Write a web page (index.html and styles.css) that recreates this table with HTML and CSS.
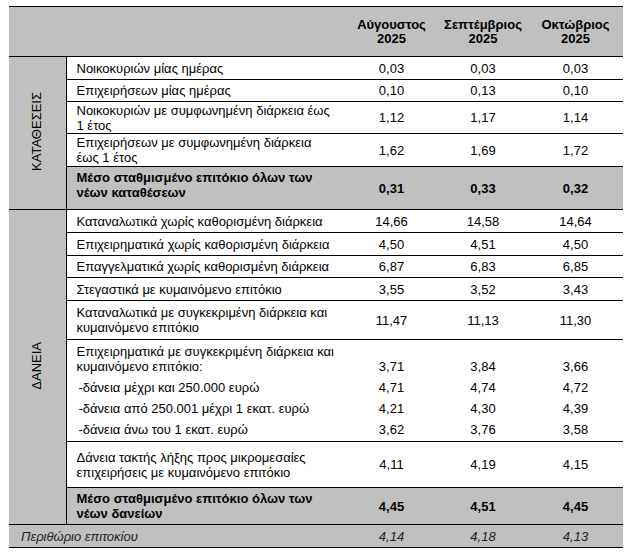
FILE: index.html
```html
<!DOCTYPE html>
<html lang="el">
<head>
<meta charset="utf-8">
<title>Επιτόκια</title>
<link rel="stylesheet" href="styles.css">
</head>
<body>
<table class="rates">
  <colgroup>
    <col class="c-cat">
    <col class="c-label">
    <col class="c-n1">
    <col class="c-n2">
    <col class="c-n3">
  </colgroup>
  <thead>
    <tr class="h-head">
      <th colspan="2"></th>
      <th>Αύγουστος<br>2025</th>
      <th>Σεπτέμβριος<br>2025</th>
      <th>Οκτώβριος<br>2025</th>
    </tr>
  </thead>
  <tbody>
    <tr class="h23">
      <td class="cat" rowspan="5"><span class="vert">ΚΑΤΑΘΕΣΕΙΣ</span></td>
      <td class="label">Νοικοκυριών μίας ημέρας</td>
      <td class="num">0,03</td><td class="num">0,03</td><td class="num">0,03</td>
    </tr>
    <tr class="h22">
      <td class="label">Επιχειρήσεων μίας ημέρας</td>
      <td class="num">0,10</td><td class="num">0,13</td><td class="num">0,10</td>
    </tr>
    <tr class="h32">
      <td class="label">Νοικοκυριών με συμφωνημένη διάρκεια έως<br>1 έτος</td>
      <td class="num">1,12</td><td class="num">1,17</td><td class="num">1,14</td>
    </tr>
    <tr class="h33">
      <td class="label">Επιχειρήσεων με συμφωνημένη διάρκεια<br>έως 1 έτος</td>
      <td class="num">1,62</td><td class="num">1,69</td><td class="num">1,72</td>
    </tr>
    <tr class="h43 total total-dep">
      <td class="label">Μέσο σταθμισμένο επιτόκιο όλων των<br>νέων καταθέσεων</td>
      <td class="num">0,31</td><td class="num">0,33</td><td class="num">0,32</td>
    </tr>
  </tbody>
  <tbody>
    <tr class="h23">
      <td class="cat" rowspan="11"><span class="vert">ΔΑΝΕΙΑ</span></td>
      <td class="label">Καταναλωτικά χωρίς καθορισμένη διάρκεια</td>
      <td class="num">14,66</td><td class="num">14,58</td><td class="num">14,64</td>
    </tr>
    <tr class="h23">
      <td class="label">Επιχειρηματικά χωρίς καθορισμένη διάρκεια</td>
      <td class="num">4,50</td><td class="num">4,51</td><td class="num">4,50</td>
    </tr>
    <tr class="h22">
      <td class="label">Επαγγελματικά χωρίς καθορισμένη διάρκεια</td>
      <td class="num">6,87</td><td class="num">6,83</td><td class="num">6,85</td>
    </tr>
    <tr class="h23">
      <td class="label">Στεγαστικά με κυμαινόμενο επιτόκιο</td>
      <td class="num">3,55</td><td class="num">3,52</td><td class="num">3,43</td>
    </tr>
    <tr class="h39">
      <td class="label">Καταναλωτικά με συγκεκριμένη διάρκεια και<br>κυμαινόμενο επιτόκιο</td>
      <td class="num">11,47</td><td class="num">11,13</td><td class="num">11,30</td>
    </tr>
    <tr class="h38 grp">
      <td class="label">Επιχειρηματικά με συγκεκριμένη διάρκεια και<br>κυμαινόμενο επιτόκιο:</td>
      <td class="num">3,71</td><td class="num">3,84</td><td class="num">3,66</td>
    </tr>
    <tr class="h20 sub">
      <td class="label">-δάνεια μέχρι και 250.000 ευρώ</td>
      <td class="num">4,71</td><td class="num">4,74</td><td class="num">4,72</td>
    </tr>
    <tr class="h21 sub">
      <td class="label">-δάνεια από 250.001 μέχρι 1 εκατ. ευρώ</td>
      <td class="num">4,21</td><td class="num">4,30</td><td class="num">4,39</td>
    </tr>
    <tr class="h23 sub last">
      <td class="label">-δάνεια άνω του 1 εκατ. ευρώ</td>
      <td class="num">3,62</td><td class="num">3,76</td><td class="num">3,58</td>
    </tr>
    <tr class="h46">
      <td class="label">Δάνεια τακτής λήξης προς μικρομεσαίες<br>επιχειρήσεις με κυμαινόμενο επιτόκιο</td>
      <td class="num">4,11</td><td class="num">4,19</td><td class="num">4,15</td>
    </tr>
    <tr class="h37 total">
      <td class="label">Μέσο σταθμισμένο επιτόκιο όλων των<br>νέων δανείων</td>
      <td class="num">4,45</td><td class="num">4,51</td><td class="num">4,45</td>
    </tr>
  </tbody>
  <tfoot>
    <tr class="h23 margin">
      <td class="margin-label" colspan="2">Περιθώριο επιτοκίου</td>
      <td class="num">4,14</td><td class="num">4,18</td><td class="num">4,13</td>
    </tr>
  </tfoot>
</table>
</body>
</html>
```

FILE: styles.css
```css
html, body {
  margin: 0;
  background: #ffffff;
}

body {
  padding: 6px 12px 0 9px;
  font-family: "Liberation Sans", Arial, sans-serif;
  font-size: 13px;
  color: #000;
}

.rates {
  width: 614px;
  table-layout: fixed;
  border-collapse: collapse;
  border-top: 1px solid #000;
}

.c-cat { width: 57px; }
.c-label { width: 279px; }
.c-n1 { width: 93px; }
.c-n2 { width: 90px; }
.c-n3 { width: 95px; }

.rates th,
.rates td {
  padding: 0;
  line-height: 15px;
  vertical-align: middle;
  border-bottom: 1px solid #000;
}

.rates thead th {
  background: #c0c0c0;
  font-weight: bold;
  text-align: center;
  line-height: 14px;
}

.rates td.cat {
  background: #c0c0c0;
  border-right: 1px solid #000;
  text-align: center;
}

.vert {
  display: inline-block;
  writing-mode: vertical-rl;
  transform: rotate(180deg);
  line-height: 14px;
}

.rates td.label {
  padding-left: 10px;
  padding-right: 2px;
  white-space: nowrap;
}

.rates td.num {
  text-align: center;
}

.total td {
  background: #c0c0c0;
  font-weight: bold;
}

.total-dep td.label {
  padding-bottom: 6px;
}

.grp td,
.sub td {
  border-bottom: none;
}

.grp td {
  vertical-align: bottom;
  padding-bottom: 4px;
}

.sub td.label {
  padding-left: 12px;
}

.sub.last td {
  border-bottom: 1px solid #000;
}

.margin td {
  background: #c0c0c0;
  font-style: italic;
  color: #222;
}

.rates td.margin-label {
  padding-left: 12px;
}

.h-head { height: 50px; }
.h20 { height: 20px; }
.h21 { height: 21px; }
.h22 { height: 22px; }
.h23 { height: 23px; }
.h32 { height: 32px; }
.h33 { height: 33px; }
.h37 { height: 37px; }
.h38 { height: 38px; }
.h39 { height: 39px; }
.h43 { height: 43px; }
.h46 { height: 46px; }
```
